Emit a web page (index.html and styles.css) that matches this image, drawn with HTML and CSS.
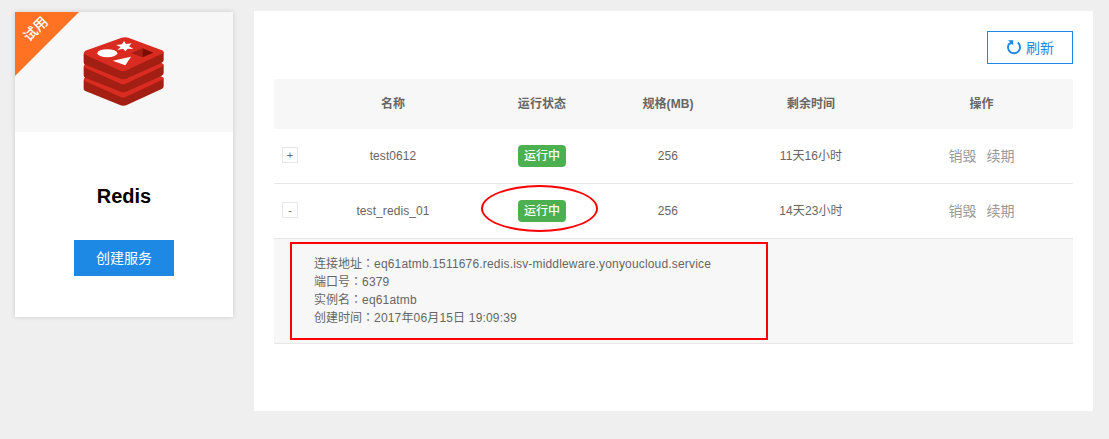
FILE: index.html
```html
<!DOCTYPE html>
<html lang="zh-CN">
<head>
<meta charset="utf-8">
<title>Redis</title>
<link rel="stylesheet" href="styles.css">
</head>
<body>
<div class="page">
  <aside class="card">
    <div class="card-head">
      <span class="ribbon"><span class="ribbon-text">试用</span></span>
      <svg class="logo" viewBox="0 0 285 240">
        <defs>
          <g id="layer">
            <path fill="#a31f13" d="M26 70V97Q26 102 31 104L133 145Q145 151 157 145L260 98Q266 95 266 90V66Z"/>
            <path fill="#d92b20" d="M31 62L138 24Q150 19 162 24L261 61Q271 66 261 71L158 119Q145 128 132 120L31 75Q22 69 31 62Z"/>
          </g>
        </defs>
        <use href="#layer" y="79"/>
        <use href="#layer" y="39"/>
        <use href="#layer"/>
        <ellipse cx="97" cy="69.500" rx="30" ry="12" fill="#fff"/>
        <path fill="#fff" d="M147 33L153 42L170 40L162 49L175 57L158 56L151 64L144 56L127 60L137 51L123 45L141 43Z"/>
        <path fill="#fff" d="M168 80L113 92L151 106Z"/>
        <path fill="#a31f13" d="M168 69L203 55V82Z"/>
        <path fill="#7a0c00" d="M203 55L235 68L203 82Z"/>
      </svg>
    </div>
    <h2 class="card-title">Redis</h2>
    <button class="create">创建服务</button>
  </aside>
  <main class="panel">
    <div class="toolbar">
      <button class="refresh">
        <svg class="refresh-icon" viewBox="0 0 16 16" fill="none" stroke="#1e88e5" stroke-width="1.900">
          <path d="M11.800 3.600A6 6 0 1 1 3.200 4.600"/>
          <path d="M2 1.200H7.200V6.400L5.600 4.800L3.800 6L2.800 4.600L4 3Z" fill="#1e88e5" stroke="none"/>
        </svg>
        <span>刷新</span>
      </button>
    </div>
    <div class="table">
      <div class="row head">
        <span></span><span>名称</span><span>运行状态</span><span>规格(MB)</span><span>剩余时间</span><span>操作</span>
      </div>
      <div class="row">
        <span class="toggle">+</span><span>test0612</span>
        <span class="status"><b class="badge">运行中</b></span>
        <span>256</span><span>11天16小时</span>
        <span class="ops"><a>销毁</a><a>续期</a></span>
      </div>
      <div class="row">
        <span class="toggle">-</span><span>test_redis_01</span>
        <span class="status"><b class="badge">运行中</b><i class="circle-mark"></i></span>
        <span>256</span><span>14天23小时</span>
        <span class="ops"><a>销毁</a><a>续期</a></span>
      </div>
      <div class="detail">
        <div class="detail-box">
          <div class="line">连接地址<span class="colon" lang="zh-TW">：</span><span class="value">eq61atmb.1511676.redis.isv-middleware.yonyoucloud.service</span></div>
          <div class="line">端口号<span class="colon" lang="zh-TW">：</span><span class="value">6379</span></div>
          <div class="line">实例名<span class="colon" lang="zh-TW">：</span><span class="value">eq61atmb</span></div>
          <div class="line">创建时间<span class="colon" lang="zh-TW">：</span><span class="value">2017年06月15日 19:09:39</span></div>
        </div>
      </div>
    </div>
  </main>
</div>
</body>
</html>
```
FILE: styles.css
```css
* { box-sizing: border-box; }
body {
  margin: 0;
  background: #efefef;
  color: #666;
  font: 12px/18px "Liberation Sans", "Noto Sans CJK SC", sans-serif;
}
.page {
  display: flex;
  align-items: flex-start;
  gap: 21px;
  height: 439px;
  padding: 11px 16px 0 15px;
}
button { font-family: inherit; padding: 0; }
.card {
  display: flex;
  flex-direction: column;
  align-items: center;
  width: 218px;
  height: 305px;
  margin-top: 1px;
  background: #fff;
  box-shadow: 0 0 5px rgba(0, 0, 0, .15);
}
.card-head {
  position: relative;
  width: 100%;
  height: 120px;
  padding: 18px 0 0 60px;
  background: #f7f7f7;
}
.ribbon {
  position: absolute;
  top: 0;
  left: 0;
  width: 64px;
  height: 64px;
  background: #ff7224;
  clip-path: polygon(0 0, 100% 0, 0 100%);
}
.ribbon-text {
  position: absolute;
  top: 8px;
  left: 0;
  width: 41px;
  color: #fff;
  font-size: 14px;
  font-weight: 500;
  text-align: center;
  transform: rotate(-45deg);
}
.logo { display: block; width: 95px; height: 80px; }
.card-title {
  margin: 52px 0 0;
  color: #000;
  font-size: 20px;
  line-height: 24px;
}
.create {
  width: 100px;
  height: 36px;
  margin-top: 32px;
  padding-bottom: 2px;
  border: 0;
  background: #1e88e5;
  color: #fff;
  font-size: 14px;
}
.panel {
  width: 839px;
  height: 400px;
  padding: 20px;
  background: #fff;
}
.toolbar { display: flex; justify-content: flex-end; }
.refresh {
  display: flex;
  align-items: center;
  justify-content: center;
  gap: 4px;
  width: 86px;
  height: 33px;
  padding-bottom: 2px;
  border: 1px solid #1e88e5;
  background: #fff;
  color: #1e88e5;
  font-size: 14px;
}
.refresh-icon { width: 16px; height: 16px; margin-top: 0; }
.table { margin-top: 15px; }
.row {
  display: grid;
  grid-template-columns: 32px 174px 124px 128px 158px 183px;
  align-items: center;
  height: 55px;
  border-bottom: 1px solid #e7e7e7;
  text-align: center;
  letter-spacing: .08px;
}
.head {
  height: 50px;
  border: 0;
  background: #f7f7f7;
  font-weight: bold;
}
.toggle {
  justify-self: center;
  width: 16px;
  height: 16px;
  margin-bottom: 2px;
  border: 1px solid #e7e7e7;
  font-size: 11px;
  line-height: 15px;
}
.status { position: relative; }
.badge {
  display: block;
  width: 48px;
  height: 22px;
  margin: 0 auto;
  border-radius: 4px;
  background: #4caf50;
  color: #fff;
  font-weight: 500;
  line-height: 22px;
}
.circle-mark {
  position: absolute;
  top: -15px;
  left: 1px;
  width: 117px;
  height: 47px;
  border: 2px solid #f00;
  border-radius: 50%;
}
.ops {
  display: flex;
  justify-content: center;
  gap: 10px;
  color: #999;
  font-size: 14px;
  letter-spacing: 0;
}
.detail {
  height: 105px;
  padding: 3px 0 0 16px;
  border-bottom: 1px solid #e7e7e7;
  background: #f7f7f7;
}
.detail-box {
  width: 478px;
  height: 98px;
  padding: 11px 22px;
  border: 2px solid #f00;
}
.line { height: 18px; white-space: nowrap; }
.value { letter-spacing: .17px; }
.colon { font-family: "Noto Sans CJK TC", sans-serif; line-height: 1; }
```
